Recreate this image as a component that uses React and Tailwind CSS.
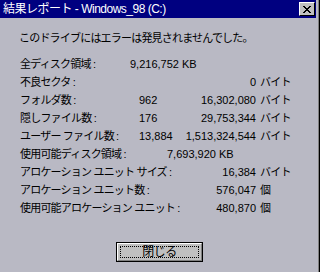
function TitleBar({ title }) {
  return (
    <div className="mr-[2px] flex h-[18px] items-center justify-between bg-[#000080] pl-[3px] pr-[1px] text-white">
      <span className="text-[12px] leading-[16px] tracking-[-0.5px]">{title}</span>
      <div className="flex h-[14px] w-[16px] items-center justify-center border border-t-white border-l-white border-r-black border-b-black bg-[#c0c0c0]">
        <svg width="8" height="7" viewBox="0 0 8 7">
          <path d="M0 0h2v1h-2zM6 0h2v1h-2zM1 1h2v1h-2zM5 1h2v1h-2zM2 2h4v1h-4zM3 3h2v1h-2zM2 4h4v1h-4zM1 5h2v1h-2zM5 5h2v1h-2zM0 6h2v1h-2zM6 6h2v1h-2z" fill="#000" />
        </svg>
      </div>
    </div>
  );
}

function Row({ cells }) {
  return (
    <div className="flex h-[18px] items-center whitespace-nowrap">
      <div className="w-[119px] shrink-0 tracking-[-0.8px]">{cells[0]}</div>
      <div className="w-[40px] shrink-0">{cells[1]}</div>
      <div className="w-[77px] shrink-0 text-right">{cells[2]}</div>
      <div className="pl-[4px] tracking-[-0.8px]">{cells[3]}</div>
    </div>
  );
}

function WideRow({ cells, wide }) {
  return (
    <div className="flex h-[18px] items-center whitespace-nowrap">
      <div className={wide ? "w-[147px] shrink-0 tracking-[-0.8px]" : "w-[110px] shrink-0 tracking-[-0.8px]"}>{cells[0]}</div>
      <div>{cells[1]}</div>
    </div>
  );
}

export default function App() {
  return (
    <div
      className="flex h-[272px] w-[320px] overflow-hidden border-r border-r-black bg-[#b9b9c4] text-[11px] leading-[14px] text-black"
      style={{ fontFamily: FONT }}
    >
      <div className="flex w-[319px] flex-col border-r border-r-[#808080]">
        <TitleBar title={TEXT.title} />
        <div className="flex flex-col pl-[19px] pt-[11px]">
          <div className="flex h-[18px] items-center whitespace-nowrap tracking-[-0.8px]">{TEXT.message}</div>
          <div className="mt-[8px] flex flex-col pl-[1px]">
            <WideRow cells={TEXT.total} />
            {TEXT.rowsA.map((c) => (
              <Row key={c[0]} cells={c} />
            ))}
            <WideRow cells={TEXT.free} wide />
            {TEXT.rowsB.map((c) => (
              <Row key={c[0]} cells={c} />
            ))}
          </div>
        </div>
        <div className="mt-[25px] flex pl-[116px]">
          <div className="flex h-[20px] w-[87px] border border-black bg-[#c0c0c0]">
            <div className="flex flex-1 border border-t-white border-l-white border-r-[#808080] border-b-[#808080] p-[2px]">
              <div className="flex flex-1 items-center justify-center border border-dotted border-black text-[12px] tracking-[-0.5px]">
                {TEXT.close}
              </div>
            </div>
          </div>
        </div>
      </div>
    </div>
  );
}

const FONT = '"Liberation Sans", "Noto Sans CJK JP", sans-serif';

const TEXT = {
  title: "結果レポート - Windows_98 (C:)",
  message: "このドライブにはエラーは発見されませんでした。",
  total: ["全ディスク領域 :", "9,216,752 KB"],
  free: ["使用可能ディスク領域 :", "7,693,920 KB"],
  rowsA: [
    ["不良セクタ :", "", "0", "バイト"],
    ["フォルダ数 :", "962", "16,302,080", "バイト"],
    ["隠しファイル数 :", "176", "29,753,344", "バイト"],
    ["ユーザー ファイル数 :", "13,884", "1,513,324,544", "バイト"],
  ],
  rowsB: [
    ["アロケーション ユニット サイズ :", "", "16,384", "バイト"],
    ["アロケーション ユニット数 :", "", "576,047", "個"],
    ["使用可能アロケーション ユニット :", "", "480,870", "個"],
  ],
  close: "閉じる",
};
